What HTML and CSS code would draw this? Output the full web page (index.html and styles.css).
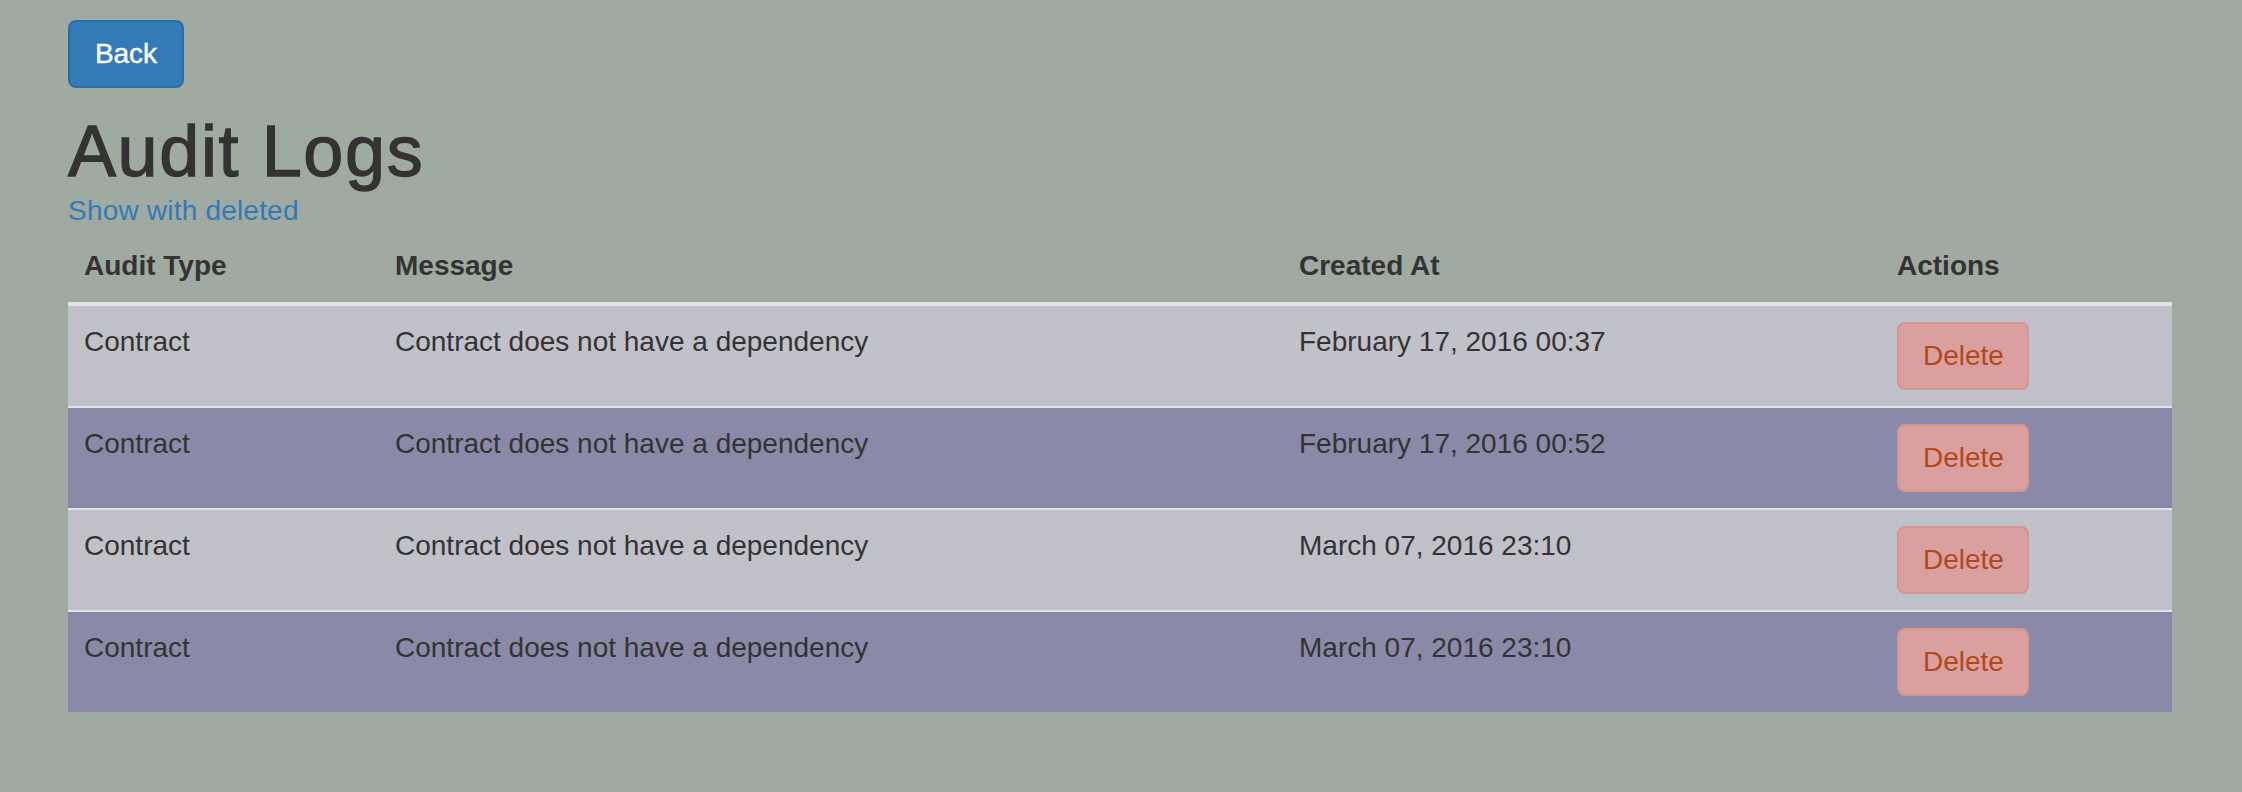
FILE: index.html
```html
<!DOCTYPE html>
<html>
<head>
<meta charset="utf-8">
<link rel="stylesheet" href="styles.css">
</head>
<body>
<div class="container">
  <div class="top"><button class="btn btn-back">Back</button></div>
  <h1 class="title">Audit Logs</h1>
  <a class="link" href="#">Show with deleted</a>
  <table class="table">
    <colgroup>
      <col class="c1"><col class="c2"><col class="c3"><col class="c4">
    </colgroup>
    <thead>
      <tr><th>Audit Type</th><th>Message</th><th>Created At</th><th>Actions</th></tr>
    </thead>
    <tbody>
      <tr class="odd"><td>Contract</td><td>Contract does not have a dependency</td><td>February 17, 2016 00:37</td><td><button class="btn btn-del">Delete</button></td></tr>
      <tr class="even"><td>Contract</td><td>Contract does not have a dependency</td><td>February 17, 2016 00:52</td><td><button class="btn btn-del">Delete</button></td></tr>
      <tr class="odd"><td>Contract</td><td>Contract does not have a dependency</td><td>March 07, 2016 23:10</td><td><button class="btn btn-del">Delete</button></td></tr>
      <tr class="even"><td>Contract</td><td>Contract does not have a dependency</td><td>March 07, 2016 23:10</td><td><button class="btn btn-del">Delete</button></td></tr>
    </tbody>
  </table>
</div>
</body>
</html>
```
FILE: styles.css
```css
html, body {
  margin: 0;
  padding: 0;
  background: #9faaa0;
  font-family: "Liberation Sans", Arial, sans-serif;
  font-size: 28px;
  line-height: 40px;
  color: #333333;
}
.container {
  padding: 20px 70px 0 68px;
}
.top {
  display: flex;
  height: 68px;
}
.btn {
  font-family: "Liberation Sans", Arial, sans-serif;
  font-size: 28px;
  line-height: 40px;
  border-radius: 8px;
  border: 2px solid transparent;
  padding: 12px 24px;
  margin: 0;
  cursor: pointer;
  box-sizing: border-box;
  height: 68px;
}
.btn-back {
  background: #337ab7;
  border-color: #2e6da4;
  color: #ffffff;
  width: 116px;
  -webkit-text-stroke: 0.4px #ffffff;
}
.btn-del {
  background: #d9a09f;
  border-color: #d59593;
  color: #b0491c;
  width: 132px;
  display: block;
}
.title {
  margin: 24px 0 0 0;
  font-size: 72px;
  line-height: 79px;
  font-weight: 400;
  letter-spacing: 1.6px;
  -webkit-text-stroke: 1.3px #333333;
  color: #333333;
}
.link {
  display: block;
  color: #337ab7;
  text-decoration: none;
  height: 39px;
  letter-spacing: 0.2px;
}
.table {
  width: 2104px;
  border-collapse: collapse;
  border-spacing: 0;
  table-layout: fixed;
}
.c1 { width: 311px; }
.c2 { width: 904px; }
.c3 { width: 598px; }
.c4 { width: 291px; }
.table th {
  text-align: left;
  font-weight: bold;
  padding: 16px;
  vertical-align: bottom;
  border-bottom: 4px solid #e3e3e3;
}
.table td {
  padding: 16px;
  vertical-align: top;
  border-top: 2px solid #e3e3e3;
  height: 68px;
}
.table tbody tr:first-child td {
  border-top: 0;
}
.odd { background: #c1c1ca; }
.even { background: #8a8aa8; }
```
